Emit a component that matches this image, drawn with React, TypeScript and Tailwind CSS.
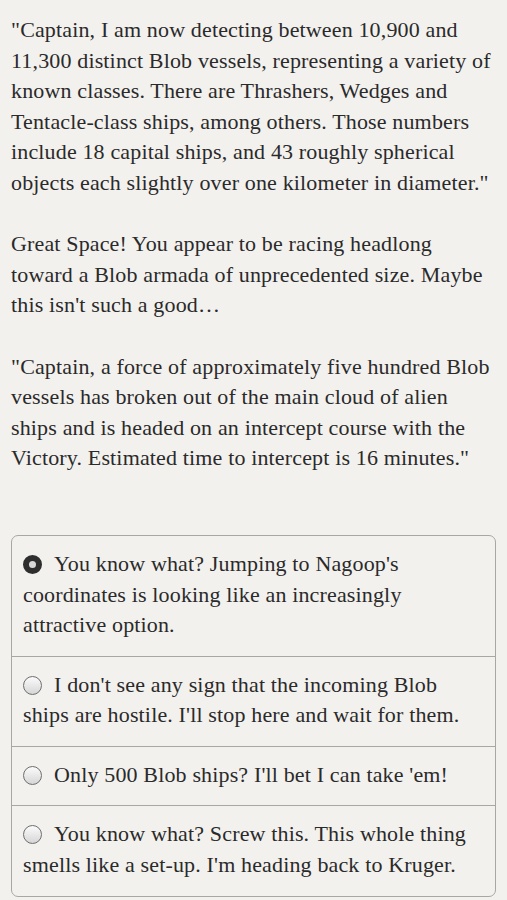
import React from 'react'

// lines broken where the original breaks them
const paragraphs = [
  [
    '"Captain, I am now detecting between 10,900 and',
    '11,300 distinct Blob vessels, representing a variety of',
    'known classes. There are Thrashers, Wedges and',
    'Tentacle-class ships, among others. Those numbers',
    'include 18 capital ships, and 43 roughly spherical',
    'objects each slightly over one kilometer in diameter."',
  ],
  [
    'Great Space! You appear to be racing headlong',
    'toward a Blob armada of unprecedented size. Maybe',
    "this isn't such a good…",
  ],
  [
    '"Captain, a force of approximately five hundred Blob',
    'vessels has broken out of the main cloud of alien',
    'ships and is headed on an intercept course with the',
    'Victory. Estimated time to intercept is 16 minutes."',
  ],
]

const choices = [
  ["You know what? Jumping to Nagoop's", 'coordinates is looking like an increasingly', 'attractive option.'],
  ["I don't see any sign that the incoming Blob", "ships are hostile. I'll stop here and wait for them."],
  ["Only 500 Blob ships? I'll bet I can take 'em!"],
  ['You know what? Screw this. This whole thing', "smells like a set-up. I'm heading back to Kruger."],
]

const Lines = ({ lines }: { lines: string[] }) => (
  <>
    {lines.map((l, i) => (
      <React.Fragment key={i}>
        {i > 0 && <br />}
        {l}
      </React.Fragment>
    ))}
  </>
)

const Radio = ({ selected }: { selected: boolean }) =>
  selected ? (
    <span className="inline-block w-[19px] h-[19px] rounded-full border-[6px] border-[#2e2e2e] bg-[#d8d8d8] align-[-3px] mr-[12px]" />
  ) : (
    <span className="inline-block w-[19px] h-[19px] rounded-full bg-[linear-gradient(#fbfbfb,#d6d6d6)] border-[1.5px] border-[#6e6e6e] align-[-3px] mr-[12px]" />
  )

const App = () => {
  return (
    <div className="min-h-[900px] bg-[#f3f1ee] text-[#2a2a2a] font-['Liberation_Serif',serif] text-[22px] tracking-[0.15px] leading-[30.6px] whitespace-nowrap px-[11px] pt-[15px] pb-[5px]">
      {paragraphs.map((p, i) => (
        <p key={i} className="mb-[30.6px]">
          <Lines lines={p} />
        </p>
      ))}
      <div className="mt-[61px] border border-[#a9a7a4] rounded-[7px] overflow-hidden">
        {choices.map((c, i) => (
          <div
            key={i}
            className={`px-[11px] pt-[13px] pb-[15px] ${i > 0 ? 'border-t border-[#a9a7a4]' : ''}`}
          >
            <Radio selected={i === 0} />
            <Lines lines={c} />
          </div>
        ))}
      </div>
    </div>
  )
}

export default App
